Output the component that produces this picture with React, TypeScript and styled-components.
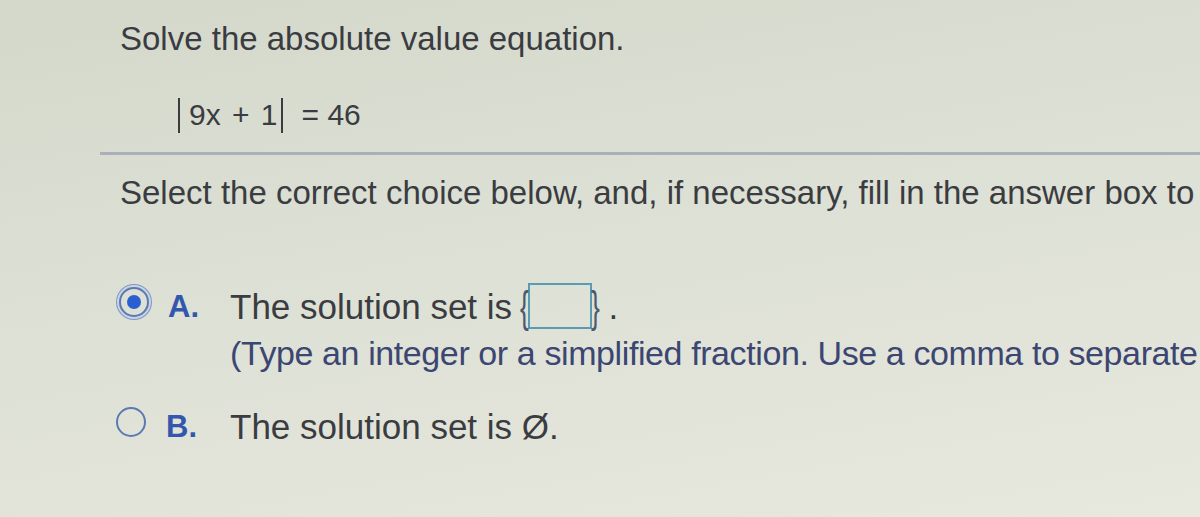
import React from 'react'
import styled, { createGlobalStyle } from 'styled-components'

const GlobalStyle = createGlobalStyle`
  html, body {
    margin: 0;
    padding: 0;
    height: 100%;
  }
  body {
    background: linear-gradient(170deg, #d4d8cb 0%, #dde0d4 45%, #e7e8de 100%);
    font-family: 'Liberation Sans', Arial, sans-serif;
    color: #3a3c41;
  }
`

const Page = styled.div`
  width: 1200px;
  height: 517px;
  overflow: hidden;
  padding-top: 19px;
  box-sizing: border-box;
`

const Title = styled.div`
  font-size: 33px;
  line-height: 40px;
  margin-left: 120px;
  white-space: nowrap;
`

const Equation = styled.div`
  display: flex;
  align-items: center;
  margin: 36px 0 0 178px;
  height: 40px;
  font-size: 30px;
  white-space: nowrap;
`

const AbsBar = styled.span<{ $gap: number }>`
  display: inline-block;
  width: 0;
  height: 35px;
  border-left: 2px solid #3a3c41;
  margin-right: ${(p) => p.$gap}px;
`

const EqText = styled.span<{ $spread?: boolean }>`
  margin-right: 3px;
  word-spacing: ${(p) => (p.$spread ? 3 : 0)}px;
`

const Divider = styled.div`
  margin: 17px 0 0 100px;
  height: 3px;
  background: #a9b0ba;
`

const Prompt = styled.div`
  margin: 18px 0 0 120px;
  font-size: 33px;
  line-height: 40px;
  white-space: nowrap;
  letter-spacing: 0;
`

const Choices = styled.div`
  display: flex;
  flex-direction: column;
  margin-top: 70px;
  gap: 32px;
`

const Choice = styled.div<{ $indent: number }>`
  display: grid;
  grid-template-columns: ${(p) => p.$indent}px 40px auto;
  align-items: start;
`

const RadioCell = styled.div`
  display: flex;
  justify-content: center;
  padding-top: 4px;
`

const Radio = styled.span<{ $checked?: boolean }>`
  width: 30px;
  height: 30px;
  border-radius: 50%;
  border: 2px solid #5b79b3;
  box-sizing: border-box;
  display: flex;
  align-items: center;
  justify-content: center;
  box-shadow: ${(p) => (p.$checked ? '0 0 0 2px #c9d3e6, 0 0 0 3px #7f98c6' : 'none')};
  &::after {
    content: '';
    display: ${(p) => (p.$checked ? 'block' : 'none')};
    width: 14px;
    height: 14px;
    border-radius: 50%;
    background: #2a5fd2;
  }
`

const Letter = styled.span`
  font-size: 31px;
  line-height: 36px;
  padding-top: 6px;
  font-weight: bold;
  color: #3357ad;
`

const Body = styled.div`
  display: flex;
  flex-direction: column;
`

const Line = styled.div`
  display: flex;
  align-items: center;
  font-size: 35px;
  line-height: 48px;
  white-space: nowrap;
`

const Hint = styled.div`
  margin-top: 4px;
  font-size: 34px;
  line-height: 36px;
  color: #3b4672;
  white-space: nowrap;
  letter-spacing: -0.4px;
`

const SetBox = styled.span`
  display: inline-flex;
  align-items: center;
  margin-left: 5px;
  height: 48px;
`

const Brace = styled.span`
  font-size: 44px;
  line-height: 48px;
  color: #4a5a70;
  transform: scaleX(0.6);
`

const AnswerBox = styled.span`
  display: inline-block;
  width: 64px;
  height: 46px;
  border: 2px solid #5b9bb2;
  box-sizing: border-box;
  margin: -3px -4px 0;
`

const Dot = styled.span`
  margin-left: 6px;
`

export default function App() {
  return (
    <>
      <GlobalStyle />
      <Page>
        <Title>Solve the absolute value equation.</Title>
        <Equation>
          <AbsBar $gap={9} />
          <EqText $spread>9x + 1</EqText>
          <AbsBar $gap={19} />
          <EqText>= 46</EqText>
        </Equation>
        <Divider />
        <Prompt>Select the correct choice below, and, if necessary, fill in the answer box to</Prompt>
        <Choices>
          <Choice $indent={168}>
            <RadioCell style={{ marginLeft: 100 }}>
              <Radio $checked />
            </RadioCell>
            <Letter>A.</Letter>
            <Body style={{ marginLeft: 22 }}>
              <Line>
                The solution set is
                <SetBox>
                  <Brace>{'{'}</Brace>
                  <AnswerBox />
                  <Brace>{'}'}</Brace>
                </SetBox>
                <Dot>.</Dot>
              </Line>
              <Hint>(Type an integer or a simplified fraction. Use a comma to separate</Hint>
            </Body>
          </Choice>
          <Choice $indent={166}>
            <RadioCell style={{ marginLeft: 96 }}>
              <Radio />
            </RadioCell>
            <Letter>B.</Letter>
            <Body style={{ marginLeft: 24 }}>
              <Line>The solution set is Ø.</Line>
            </Body>
          </Choice>
        </Choices>
      </Page>
    </>
  )
}
